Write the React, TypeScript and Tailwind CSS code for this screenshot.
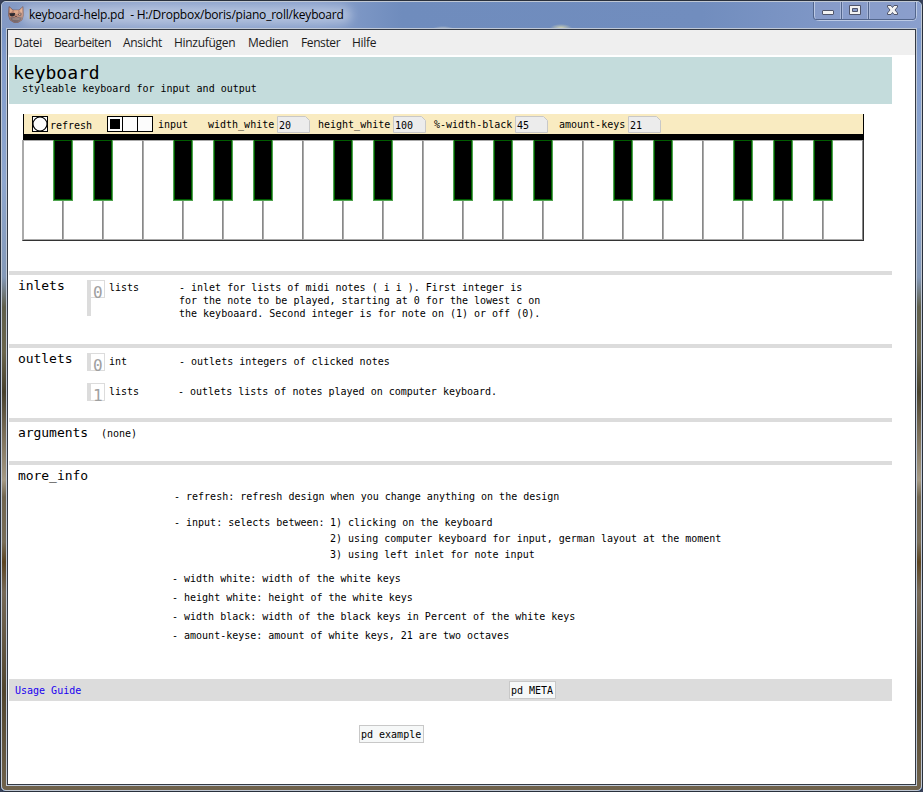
import React from "react";

const menus = [
  { label: "Datei", cls: "w-[40px] tracking-[-0.3px]" },
  { label: "Bearbeiten", cls: "w-[69px] tracking-[-0.45px]" },
  { label: "Ansicht", cls: "w-[51px] tracking-[-0.3px]" },
  { label: "Hinzufügen", cls: "w-[74px] tracking-[-0.3px]" },
  { label: "Medien", cls: "w-[53px] tracking-[-0.3px]" },
  { label: "Fenster", cls: "w-[51px] tracking-[-0.4px]" },
  { label: "Hilfe", cls: "w-[40px] tracking-[-0.3px]" },
];

const blackKeys = Array.from({ length: 21 }, (_, i) => i).filter((i) => [0, 1, 3, 4, 5].includes(i % 7));

function CatIcon() {
  return (
    <svg width="16" height="17" viewBox="0 0 16 17" className="shrink-0">
      <path d="M1 0.5L5 4H11L15 0.5L15.6 9L14 14L10 16.5H6L2 14L0.4 9Z" fill="#b98470" stroke="#6b5252" strokeWidth="0.6" />
      <path d="M1.8 1.8L4.8 4.8L2 7ZM14.2 1.8L11.2 4.8L14 7Z" fill="#e0aa8c" />
      <path d="M5.5 4.3H10.5L9.5 8H6.5Z" fill="#dca585" />
      <path d="M1.2 7.2L7.2 7L6.6 9.8L4 10.6L2 9.8Z" fill="#2d2a30" />
      <path d="M10 8L13.6 7.6L13 9.4H10.8Z" fill="#4b3a3c" />
      <path d="M11.2 8.5H12.4" stroke="#e8d9b0" strokeWidth="0.9" />
      <path d="M2 11.5L6 11L8 12L10 11L14 11.5L13 14L10 16H6L3 14Z" fill="#75686c" />
      <path d="M4.5 13H11.5" stroke="#c9a898" strokeWidth="0.8" />
      <path d="M7 10H9L8 11.2Z" fill="#3a2b2d" />
    </svg>
  );
}

function WindowButtons() {
  return (
    <svg width="106" height="22" viewBox="0 0 106 22" className="-mt-px shrink-0">
      <path d="M1.5 0V15.5Q1.5 19.5 5.5 19.5H99.5Q103.5 19.5 103.5 15.5V0" fill="#8c9fcc" fillOpacity="0.6" stroke="#bccae5" />
      <path d="M0.5 0V16Q0.5 18.5 3 18.5H100Q102.5 18.5 102.5 16V0M28.5 0V18M55.5 0V18" fill="none" stroke="#52658c" />
      <path d="M27.5 1V18M29.5 1V18M54.5 1V18M56.5 1V18" stroke="#a9b8da" />
      <rect x="9.5" y="9.5" width="11" height="4" rx="0.5" fill="#f2f2f2" stroke="#50556b" />
      <path d="M36.5 4.5H47.5V13.5H36.5ZM39.5 7.5V10.5H44.5V7.5Z" fill="#f2f2f2" fillRule="evenodd" stroke="#50556b" />
      <path d="M74.5 4.5H78L79.5 6.5L81 4.5H84.5V6L82 9L84.5 12V13.5H81L79.5 11.5L78 13.5H74.5V12L77 9L74.5 6Z" fill="#f2f2f2" stroke="#50556b" />
    </svg>
  );
}

function NumberBox({ value }: { value: number }) {
  return (
    <div className="relative h-[17px] w-[33px] shrink-0">
      <svg width="33" height="17" className="absolute inset-0">
        <path d="M0.5 0.5H28.5L32.5 4.5V16.5H0.5Z" fill="#ececec" stroke="#c8c8c8" />
      </svg>
      <span className="relative block pt-[4px] pl-[2px]">{value}</span>
    </div>
  );
}

function Keyboard() {
  return (
    <div className="ml-[13px] mt-[10px] w-[842px]">
      <div className="ml-px flex h-[20px] w-[841px] border-r border-l border-black bg-[#f9ebc1] pt-[2px]">
        <svg width="16" height="16" className="ml-[8px] shrink-0">
          <rect x="0.5" y="0.5" width="15" height="15" fill="#fcfcfc" stroke="#000" />
          <circle cx="8" cy="8" r="7" fill="none" stroke="#000" strokeWidth="1.1" />
        </svg>
        <span className="ml-[2px] w-[57px] shrink-0 pt-[4px]">refresh</span>
        <svg width="46" height="16" className="shrink-0">
          <rect x="0.5" y="0.5" width="45" height="15" fill="#fcfcfc" stroke="#000" />
          <path d="M15.5 0V16M30.5 0V16" stroke="#000" />
          <rect x="3" y="3" width="10" height="10" />
        </svg>
        <span className="ml-[5px] w-[50px] shrink-0 pt-[3px]">input</span>
        <span className="w-[69px] shrink-0 pt-[3px]">width_white</span>
        <NumberBox value={20} />
        <span className="ml-[8px] w-[75px] shrink-0 pt-[3px]">height_white</span>
        <NumberBox value={100} />
        <span className="ml-[8px] w-[81px] shrink-0 pt-[3px]">%-width-black</span>
        <NumberBox value={45} />
        <span className="ml-[11px] w-[69px] shrink-0 pt-[3px]">amount-keys</span>
        <NumberBox value={21} />
      </div>
      <div className="ml-px h-[6px] bg-black" />
      <div className="relative flex h-[101px] border-b border-l border-b-[#333333] border-l-[#aaaaaa]">
        {Array.from({ length: 21 }, (_, i) => (
          <div key={i} className="w-[40px] shrink-0 border-t border-r border-b border-l border-[#aaaaaa] border-r-[#888888] bg-white" />
        ))}
        <div className="w-px bg-[#333333]" />
        {blackKeys.map((i) => (
          <div
            key={i}
            className="absolute top-0 h-[61px] w-[20px] border-r border-b border-l border-[#4fa34f] bg-black"
            style={{ left: 30 + i * 40 }}
          >
            <div className="h-full border border-[#005a00]" />
          </div>
        ))}
      </div>
    </div>
  );
}

function Port({ n }: { n: number }) {
  return (
    <div className="h-[18px] w-[18px] shrink-0 border border-l-4 border-[#dcdcdc] bg-white pt-[2px] pl-[2px] text-[16px] leading-[20px] text-[#a0a0a0]">
      {n}
    </div>
  );
}

function Rule() {
  return <div className="h-[4px] w-[883px] bg-[#dcdcdc]" />;
}

function Heading({ children, className = "" }: { children: React.ReactNode; className?: string }) {
  return <h2 className={`shrink-0 pl-[9px] text-[13px] leading-[16px] tracking-[-0.05px] ${className}`}>{children}</h2>;
}

export default function App() {
  return (
    <div className="h-[792px] w-[923px] overflow-hidden bg-[#39425a]">
      <div className="h-[792px] w-[923px] rounded-t-[6px] rounded-b-[5px] border border-[#29303c] bg-[#6f8dbd]">
        <div className="flex h-[790px] w-[921px] flex-col rounded-[5px] border border-[#c0c8d4] bg-[linear-gradient(180deg,#7290c2_0px,#839dcd_60px,#8ea7cf_180px,#8499b8_275px,#605f4b_305px,#6a654c_350px,#47402c_390px,#786c56_430px,#a59a85_478px,#71654e_495px,#786d58_540px,#5b431f_560px,#766957_590px,#51452d_690px,#70634d_790px)] px-[4px] pb-[4px]">
          <div className="-mx-[4px] flex h-[26px] shrink-0 items-start overflow-hidden rounded-t-[4px] bg-[radial-gradient(ellipse_11px_4px_at_559px_26px,#d0d2b4,transparent),radial-gradient(ellipse_11px_3px_at_441px_27px,#bcc5cc,transparent),linear-gradient(90deg,#8399c4_0px,#90a5cd_150px,#879fcb_320px,#6f8cbd_400px,#718dbe_700px,#8a9fcd_919px)] pl-[6px] font-['Open_Sans',sans-serif]">
            <div className="pt-[4px]">
              <CatIcon />
            </div>
            <div className="relative ml-[5px] h-[26px] pt-[3px] text-[12px] leading-[20px] tracking-[-0.21px] whitespace-pre text-black">
              <div className="absolute -inset-x-[8px] inset-y-[4px] rounded-full bg-white/35 blur-[5px]" />
              <span className="relative">keyboard-help.pd  - H:/Dropbox/boris/piano_roll/keyboard</span>
            </div>
            <div className="mr-[2px] ml-auto">
              <WindowButtons />
            </div>
          </div>
          <div className="h-[758px] w-[911px] border border-[#bfc8d6]">
            <div className="h-[756px] w-[909px] border border-[#343a44] bg-white">
              <nav className="flex h-[25px] items-center bg-[#efefef] pl-[6px] font-['Open_Sans',sans-serif] text-[12px] leading-[20px] text-[#1c1c1c]">
                {menus.map((m) => (
                  <span key={m.label} className={`shrink-0 ${m.cls}`}>{m.label}</span>
                ))}
              </nav>
              <main className="flex flex-col pt-[2px] pl-px font-['DejaVu_Sans_Mono',monospace] text-[10px] leading-[12px] whitespace-pre text-black">
                <header className="h-[47px] w-[883px] bg-[#c4dcdc]">
                  <h1 className="pt-[5px] pl-[4px] text-[18px] leading-[21px]">keyboard</h1>
                  <p className="pl-[13px]">styleable keyboard for input and output</p>
                </header>
                <Keyboard />
                <div className="h-[30px]" />
                <Rule />
                <section className="flex h-[69px]">
                  <Heading className="w-[78px] pt-[3px]">inlets</Heading>
                  <div className="mt-[5px] h-[36px]">
                    <Port n={0} />
                    <div className="h-[18px] w-[4px] bg-[#dcdcdc]" />
                  </div>
                  <p className="w-[74px] pt-[7px] pl-[4px]">lists</p>
                  <p className="pt-[6px] leading-[13px]">
                    {"- inlet for lists of midi notes ( i i ). First integer is\nfor the note to be played, starting at 0 for the lowest c on\nthe keyboaard. Second integer is for note on (1) or off (0)."}
                  </p>
                </section>
                <Rule />
                <section className="flex h-[70px]">
                  <Heading className="w-[78px] pt-[3px]">outlets</Heading>
                  <div className="flex flex-col gap-[12px] pt-[5px]">
                    <div className="flex h-[18px]">
                      <Port n={0} />
                      <p className="w-[74px] pt-[3px] pl-[4px]">int</p>
                      <p className="pt-[3px]">- outlets integers of clicked notes</p>
                    </div>
                    <div className="flex h-[18px]">
                      <Port n={1} />
                      <p className="w-[73px] pt-[3px] pl-[4px]">lists</p>
                      <p className="pt-[3px]">- outlets lists of notes played on computer keyboard.</p>
                    </div>
                  </div>
                </section>
                <Rule />
                <section className="flex h-[39px]">
                  <Heading className="w-[92px] pt-[3px]">arguments</Heading>
                  <p className="pt-[6px]">(none)</p>
                </section>
                <Rule />
                <section className="h-[214px]">
                  <Heading className="pt-[3px]">more_info</Heading>
                  <p className="mt-[7px] pl-[165px]">- refresh: refresh design when you change anything on the design</p>
                  <div className="mt-[12px] flex pl-[165px] leading-[16px]">
                    <p className="w-[156px]">- input: selects between: </p>
                    <ol>
                      <li>1) clicking on the keyboard</li>
                      <li>2) using computer keyboard for input, german layout at the moment</li>
                      <li>3) using left inlet for note input</li>
                    </ol>
                  </div>
                  <ul className="mt-[6px] pl-[163px] leading-[19px]">
                    <li>- width white: width of the white keys</li>
                    <li>- height white: height of the white keys</li>
                    <li>- width black: width of the black keys in Percent of the white keys</li>
                    <li>- amount-keyse: amount of white keys, 21 are two octaves</li>
                  </ul>
                </section>
                <footer className="flex h-[22px] w-[883px] bg-[#dcdcdc] pt-[2px]">
                  <a className="w-[500px] pt-[4px] pl-[6px] text-[#1a00f0]">Usage Guide</a>
                  <div className="h-[18px] w-[47px] border border-[#c8c8c8] bg-[#f6f8f8] pt-[3px] pl-px">pd META</div>
                </footer>
                <div className="mt-[24px] ml-[350px] h-[18px] w-[65px] border border-[#c8c8c8] bg-[#f6f8f8] pt-[3px] pl-px">pd example</div>
              </main>
            </div>
          </div>
        </div>
      </div>
    </div>
  );
}
